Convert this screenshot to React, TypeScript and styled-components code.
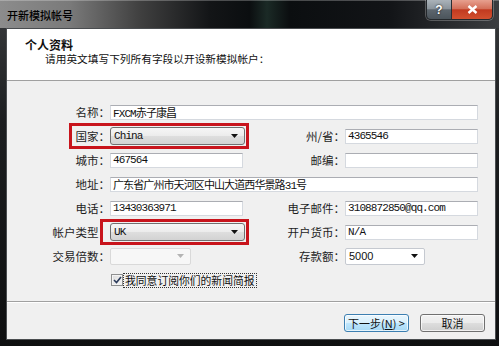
import styled, { createGlobalStyle } from "styled-components";
import { ReactNode } from "react";

const GlobalStyle = createGlobalStyle`
  html, body {
    margin: 0;
    padding: 0;
  }
  body {
    width: 499px;
    height: 346px;
    overflow: hidden;
    background: #101214;
    font-family: "Noto Sans CJK SC", "Liberation Sans", sans-serif;
  }
  * {
    box-sizing: border-box;
  }
`;

const Window = styled.div`
  width: 499px;
  height: 346px;
  display: flex;
  flex-direction: column;
  padding-bottom: 6px;
  background: linear-gradient(180deg, #3a3c3e 0%, #1c1e20 35%, #0e0f10 100%);
`;

const TitleBar = styled.div`
  height: 28px;
  flex: none;
  display: flex;
  justify-content: space-between;
  align-items: flex-start;
  padding: 0 6px 0 7px;
  background: linear-gradient(
    90deg,
    #8c8c8c 0%,
    #7a7a7a 14%,
    #404040 28%,
    #131517 42%,
    #0b0e10 50%,
    #1b2a26 53.5%,
    #0b0e10 58%,
    #121417 78%,
    #3b3d40 100%
  );
  box-shadow: inset 0 1px 0 rgba(255, 255, 255, 0.25);
`;

const TitleText = styled.span`
  margin-top: 8px;
  font-size: 11px;
  line-height: 14px;
  font-weight: 500;
  color: #000;
`;

const CaptionGroup = styled.div`
  display: flex;
  height: 20px;
  border: 1px solid #24282c;
  border-top: none;
  border-radius: 0 0 5px 5px;
  overflow: hidden;
  box-shadow: 0 0 0 1px rgba(255, 255, 255, 0.25);
`;

const CaptionButton = styled.div<{ $close?: boolean }>`
  width: ${(p) => (p.$close ? "41px" : "24px")};
  height: 100%;
  display: flex;
  align-items: center;
  justify-content: center;
  color: #fff;
  font-family: "Liberation Sans", sans-serif;
  font-weight: bold;
  font-size: 12px;
  text-shadow: 0 0 2px #000;
  background: ${(p) =>
    p.$close
      ? "linear-gradient(180deg, #e7a08f 0%, #d4705a 45%, #c13a20 52%, #d2502f 100%)"
      : "linear-gradient(180deg, #aab2b9 0%, #8b949c 45%, #5d666e 52%, #4b545b 100%)"};
  border-left: ${(p) => (p.$close ? "1px solid #2a2e33" : "none")};
`;

const Client = styled.div`
  flex: 1;
  margin: 0 3px 0 6px;
  border: 1px solid #4a4d50;
  background: #f0f0f0;
  display: flex;
  flex-direction: column;
`;

const Header = styled.div`
  height: 52px;
  flex: none;
  background: #fff;
  border-bottom: 1px solid #a0a0a0;
  padding: 9px 0 0 18px;
  color: #111;
`;

const HeaderTitle = styled.div`
  font-size: 12px;
  line-height: 14px;
  font-weight: bold;
`;

const HeaderSub = styled.div`
  margin-left: 20px;
  font-size: 10.7px;
  line-height: 14px;
`;

const Body = styled.div`
  flex: 1;
  padding: 19px 0 9px 0;
  border-bottom: 1px solid #a0a0a0;
`;

const Form = styled.div`
  display: grid;
  grid-template-columns: 103px 133px 102px 133px;
  grid-auto-rows: 24px;
  align-items: center;
`;

const Label = styled.span`
  justify-self: end;
  font-size: 11.5px;
  line-height: 14px;
  color: #1e1e1e;
  white-space: nowrap;
`;

const TextBox = styled.input<{ $span?: boolean }>`
  grid-column: ${(p) => (p.$span ? "2 / 5" : "auto")};
  width: 100%;
  height: 15px;
  margin: 0;
  padding: 0 2px;
  border: 1px solid #d5d9df;
  border-top-color: #abadb3;
  background: #fff;
  outline: none;
  color: #111;
  font-family: "Liberation Mono", "Noto Sans CJK SC", monospace;
  font-size: 11px;
  letter-spacing: -0.9px;
`;

const Combo = styled.div<{ $kind: "button" | "edit" | "disabled"; $w: number }>`
  position: relative;
  width: ${(p) => p.$w}px;
  height: ${(p) => (p.$kind === "button" ? 18 : 17)}px;
  display: flex;
  align-items: center;
  justify-content: space-between;
  padding: 0 6px 0 3px;
  border: 1px solid
    ${(p) => (p.$kind === "button" ? "#707070" : p.$kind === "edit" ? "#c5c9d0" : "#d9d9d9")};
  border-radius: ${(p) => (p.$kind === "button" ? 3 : 2)}px;
  background: ${(p) =>
    p.$kind === "button"
      ? "linear-gradient(180deg, #f6f6f6 0%, #ececec 48%, #dedede 52%, #d2d2d2 100%)"
      : p.$kind === "edit"
      ? "#fff"
      : "#f7f7f7"};
  color: #111;
  font-size: 11px;
  font-family: ${(p) =>
    p.$kind === "edit"
      ? '"Liberation Sans", sans-serif'
      : '"Liberation Mono", "Noto Sans CJK SC", monospace'};
  letter-spacing: ${(p) => (p.$kind === "edit" ? "0" : "-0.9px")};
`;

const Highlight = styled.div<{ $l: number; $t: number; $r: number; $b: number }>`
  position: absolute;
  left: ${(p) => p.$l}px;
  top: ${(p) => p.$t}px;
  right: ${(p) => p.$r}px;
  bottom: ${(p) => p.$b}px;
  border: 3px solid #c8141c;
  pointer-events: none;
`;

const CheckRow = styled.label`
  grid-column: 2 / 5;
  display: flex;
  align-items: center;
  gap: 1px;
  padding-left: 1px;
`;

const CheckBox = styled.span`
  width: 12px;
  height: 12px;
  display: flex;
  align-items: center;
  justify-content: center;
  border: 1px solid #8e8f8f;
  background: linear-gradient(135deg, #dcdcdc 0%, #f6f6f6 100%);
  box-shadow: inset 0 0 0 1px #f4f4f4;
`;

const CheckText = styled.span`
  font-size: 10.8px;
  line-height: 13px;
  padding: 0 1px;
  outline: 1px dotted #333;
  outline-offset: 0;
  color: #111;
`;

const Footer = styled.div`
  height: 37px;
  flex: none;
  display: flex;
  justify-content: flex-end;
  gap: 11px;
  padding: 11px 10px 0 0;
  border-top: 1px solid #fff;
`;

const Button = styled.div<{ $default?: boolean }>`
  width: 65px;
  height: 18px;
  display: flex;
  align-items: center;
  justify-content: center;
  border: 1px solid ${(p) => (p.$default ? "#3c7fb1" : "#707070")};
  border-radius: 3px;
  background: ${(p) =>
    p.$default
      ? "linear-gradient(180deg, #eaf6fd 0%, #d9f0fc 48%, #bee6fd 52%, #a7d9f5 100%)"
      : "linear-gradient(180deg, #f2f2f2 0%, #ebebeb 48%, #dddddd 52%, #cfcfcf 100%)"};
  box-shadow: inset 0 0 0 1px rgba(255, 255, 255, 0.7);
  font-size: 11px;
  color: #111;
  white-space: nowrap;
`;

const Arrow = ({ color = "#111" }: { color?: string }) => (
  <svg width="7" height="4" viewBox="0 0 7 4">
    <polygon points="0,0 7,0 3.5,4" fill={color} />
  </svg>
);

const Row = ({ label, children }: { label: string; children: ReactNode }) => (
  <>
    <Label>{label}</Label>
    {children}
  </>
);

export default function App() {
  return (
    <>
      <GlobalStyle />
      <Window>
        <TitleBar>
          <TitleText>开新模拟帐号</TitleText>
          <CaptionGroup>
            <CaptionButton>?</CaptionButton>
            <CaptionButton $close>
              <svg width="11" height="9" viewBox="0 0 11 9">
                <path d="M1.5 1 L9.5 8 M9.5 1 L1.5 8" stroke="#fff" strokeWidth="2.4" />
              </svg>
            </CaptionButton>
          </CaptionGroup>
        </TitleBar>
        <Client>
          <Header>
            <HeaderTitle>个人资料</HeaderTitle>
            <HeaderSub>请用英文填写下列所有字段以开设新模拟帐户：</HeaderSub>
          </Header>
          <Body>
            <Form>
              <Row label="名称：">
                <TextBox $span readOnly value="FXCM赤子康昌" />
              </Row>

              <Row label="国家：">
                <Combo $kind="button" $w={135}>
                  China
                  <Arrow />
                  <Highlight $l={-42} $t={-5} $r={-5} $b={-5} />
                </Combo>
              </Row>
              <Row label="州/省：">
                <TextBox readOnly value="4365546" />
              </Row>

              <Row label="城市：">
                <TextBox readOnly value="467564" />
              </Row>
              <Row label="邮编：">
                <TextBox readOnly value="" />
              </Row>

              <Row label="地址：">
                <TextBox $span readOnly value="广东省广州市天河区中山大道西华景路31号" />
              </Row>

              <Row label="电话：">
                <TextBox readOnly value="13430363971" />
              </Row>
              <Row label="电子邮件：">
                <TextBox readOnly value="3108872850@qq.com" />
              </Row>

              <Row label="帐户类型：">
                <Combo $kind="button" $w={135}>
                  UK
                  <Arrow />
                  <Highlight $l={-11} $t={-5} $r={-5} $b={-5} />
                </Combo>
              </Row>
              <Row label="开户货币：">
                <TextBox readOnly value="N/A" />
              </Row>

              <Row label="交易倍数：">
                <Combo $kind="disabled" $w={81}>
                  <span />
                  <Arrow color="#b4b4b4" />
                </Combo>
              </Row>
              <Row label="存款额：">
                <Combo $kind="edit" $w={80}>
                  5000
                  <Arrow />
                </Combo>
              </Row>

              <span />
              <CheckRow>
                <CheckBox>
                  <svg width="9" height="8" viewBox="0 0 9 8">
                    <path d="M1 4 L3.5 6.5 L8 1" stroke="#2a3a5a" strokeWidth="1.6" fill="none" />
                  </svg>
                </CheckBox>
                <CheckText>我同意订阅你们的新闻简报</CheckText>
              </CheckRow>
            </Form>
          </Body>
          <Footer>
            <Button $default>
              下一步(<u>N</u>) &gt;
            </Button>
            <Button>取消</Button>
          </Footer>
        </Client>
      </Window>
    </>
  );
}
